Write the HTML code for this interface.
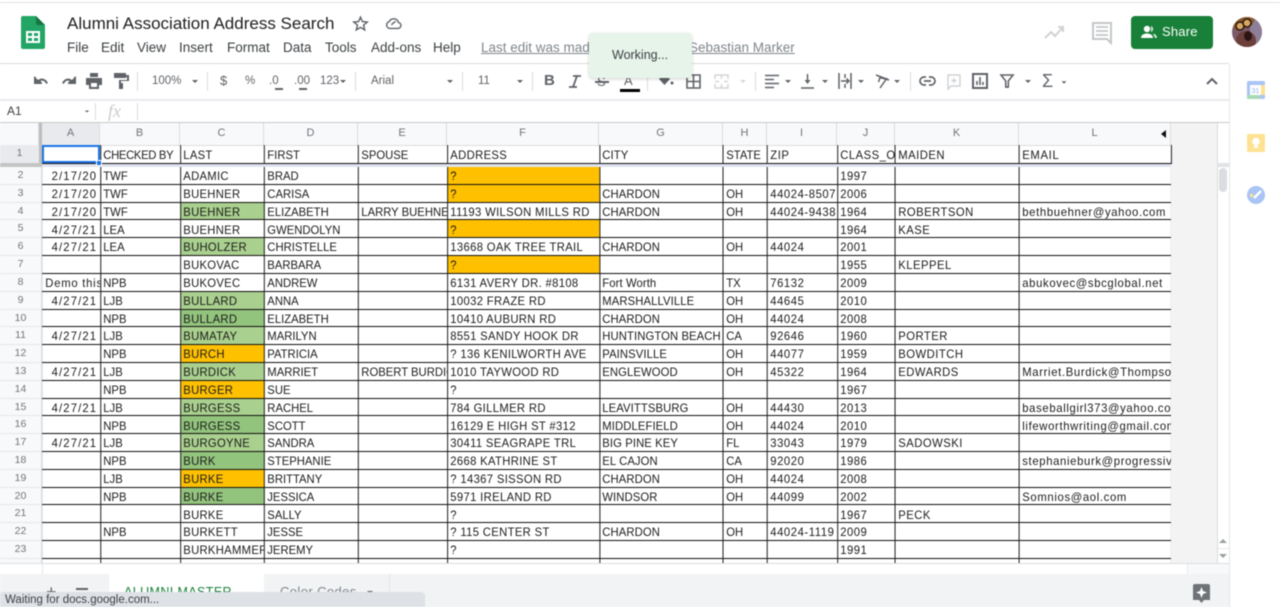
<!DOCTYPE html>
<html><head><meta charset="utf-8">
<style>
*{box-sizing:border-box}
html,body{margin:0;padding:0;width:1280px;height:607px;overflow:hidden;background:#fff;font-family:"Liberation Sans",sans-serif}
#p{position:relative;width:1280px;height:607px;overflow:hidden;filter:blur(.45px)}
.a{position:absolute}
.t{position:absolute;white-space:nowrap;color:#5f6368;line-height:14px}
.m{position:absolute;top:40px;font-size:13.5px;color:#3c4043;line-height:15px;white-space:nowrap}
svg{position:absolute;overflow:visible}
.sep{position:absolute;top:72px;width:1px;height:19px;background:#dadce0}
.ch{position:absolute;top:123px;height:22px;font-size:11px;line-height:21px;text-align:center;color:#70757a;background:#f8f9fa;border-right:1px solid #dadce0}
.rh{height:17.82px;line-height:16px;font-size:10.5px;color:#70757a;text-align:center;border-bottom:1px solid #e4e6e8}
.arr{position:absolute;width:0;height:0;border-left:3.5px solid transparent;border-right:3.5px solid transparent;border-top:3.5px solid #5f6368}
table{border-collapse:collapse;table-layout:fixed;width:1201px;position:absolute;transform:scaleX(.94);transform-origin:0 0;font-size:12px;color:#1c1c1c}
td{border:1px solid #111;padding:1.5px 3px 0 2.5px;height:17.82px;line-height:14px;overflow:hidden;white-space:nowrap}
td:first-child{border-left:1px solid #e4e4e4}
td:nth-child(3){letter-spacing:.3px}
td:nth-child(6){letter-spacing:.35px}
td:nth-child(7){letter-spacing:.1px}
td:nth-child(9){letter-spacing:.6px}
td:nth-child(10){letter-spacing:.5px}
td:nth-child(11){letter-spacing:.5px}
td:nth-child(12){letter-spacing:.7px}
td.d{text-align:right;letter-spacing:1.2px;padding-right:3px}
.g{background:#a9d08e}.h{background:#93c47d}.o{background:#ffc000}
</style></head><body><div id="p">

<div class="a" style="left:0;top:2px;width:1280px;height:1px;background:#e0e0e0"></div>

<!-- Sheets logo -->
<svg style="left:21px;top:16px" width="24" height="34" viewBox="0 0 24 34">
<path d="M2 0H15L24 9V31a2 2 0 0 1-2 2H2a2 2 0 0 1-2-2V2a2 2 0 0 1 2-2z" fill="#23a566"/>
<path d="M15 0L24 9H17a2 2 0 0 1-2-2z" fill="#16753f"/>
<path d="M5 15H19V27H5zM7 17V20H11V17zM13 17V20H17V17zM7 22V25H11V22zM13 22V25H17V22z" fill="#fff" fill-rule="evenodd"/>
</svg>

<div class="t" style="left:67px;top:14px;font-size:17px;line-height:20px;color:#202124">Alumni Association Address Search</div>
<svg style="left:352px;top:15px" width="17" height="17" viewBox="0 0 24 24"><path d="M12 3l2.7 6.3 6.8.6-5.2 4.5 1.6 6.7L12 17.5 6.1 21l1.6-6.7L2.5 9.9l6.8-.6z" fill="none" stroke="#5f6368" stroke-width="2"/></svg>
<svg style="left:385px;top:15px" width="17" height="17" viewBox="0 0 24 24"><path d="M7 19a5 5 0 0 1-1-9.8A7 7 0 0 1 19 10.500a4.300 4.300 0 0 1-.5 8.500z" fill="none" stroke="#5f6368" stroke-width="2"/><path d="M9 14l3-3 3-2" fill="none" stroke="#5f6368" stroke-width="2"/></svg>

<div class="m" style="left:67px">File</div>
<div class="m" style="left:101px">Edit</div>
<div class="m" style="left:137px">View</div>
<div class="m" style="left:179px">Insert</div>
<div class="m" style="left:227px">Format</div>
<div class="m" style="left:283px">Data</div>
<div class="m" style="left:325px">Tools</div>
<div class="m" style="left:371px">Add-ons</div>
<div class="m" style="left:433px">Help</div>
<div class="m" style="left:481px;color:#80868b;text-decoration:underline">Last edit was made</div>
<div class="m" style="left:689px;color:#80868b;text-decoration:underline">Sebastian Marker</div>

<!-- right header -->
<svg style="left:1044px;top:24px" width="21" height="16" viewBox="0 0 21 16"><path d="M1 14l6-6 4 4 8-9M14 3h5v5" fill="none" stroke="#d0d2d5" stroke-width="2"/></svg>
<svg style="left:1092px;top:22px" width="20" height="22" viewBox="0 0 20 22"><path d="M1 1H19V21L15 17H1z" fill="none" stroke="#c4c6c9" stroke-width="2"/><path d="M4 5H16M4 9H16M4 13H16" stroke="#c4c6c9" stroke-width="1.800"/></svg>
<div class="a" style="left:1131px;top:16px;width:82px;height:33px;background:#188038;border-radius:4px"></div>
<svg style="left:1141px;top:25px" width="16" height="14" viewBox="0 0 16 14"><circle cx="6" cy="4" r="3.200" fill="#fff"/><path d="M0 13c0-3 3-4.500 6-4.500s6 1.500 6 4.500z" fill="#fff"/><path d="M10 1a3.200 3.200 0 0 1 0 6M12 8.500c2 .5 4 1.500 4 4.500h-2" fill="#cfe5d6"/></svg>
<div class="t" style="left:1162px;top:25px;font-size:13px;color:#fff;font-weight:400;letter-spacing:.2px">Share</div>
<svg style="left:1232px;top:17px" width="30" height="30" viewBox="0 0 30 30">
<defs><clipPath id="c"><circle cx="15" cy="15" r="15"/></clipPath></defs>
<g clip-path="url(#c)"><rect width="30" height="30" fill="#7b5a6b"/><rect x="18" width="12" height="30" fill="#8d7f97"/><path d="M6 0H24L20 8 5 14 0 8z" fill="#8a5a2c"/><ellipse cx="14" cy="24" rx="10" ry="10" fill="#6b3f3a"/><ellipse cx="16" cy="19" rx="4" ry="5" fill="#2b1513"/><circle cx="8" cy="9" r="4" fill="#d9a860" stroke="#2a1a10" stroke-width="1.500"/><circle cx="15" cy="6" r="4" fill="#d9a860" stroke="#2a1a10" stroke-width="1.500"/></g></svg>

<!-- toolbar -->
<div class="a" style="left:0;top:63px;width:1229px;height:1px;background:#dadce0"></div>
<div class="a" style="left:0;top:99px;width:1229px;height:2px;background:#e8eaed"></div>
<svg style="left:33px;top:74px" width="17" height="14" viewBox="0 0 17 14"><path d="M2 3V9H8L5.700 6.800C8.500 4.500 12.500 5.500 14 9.500" fill="none" stroke="#5f6368" stroke-width="2" stroke-linejoin="round"/><path d="M1 2V10H9z" fill="#5f6368"/></svg>
<svg style="left:60px;top:74px" width="17" height="14" viewBox="0 0 17 14"><path d="M15 3V9H9L11.300 6.800C8.500 4.500 4.500 5.500 3 9.500" fill="none" stroke="#5f6368" stroke-width="2" stroke-linejoin="round"/><path d="M16 2V10H8z" fill="#5f6368"/></svg>
<svg style="left:86px;top:73px" width="16" height="16" viewBox="0 0 16 16"><path d="M4 0H12V4H4zM0 5H16V12H13V16H3V12H0zM5 10V14H11V10z" fill="#5f6368" fill-rule="evenodd"/></svg>
<svg style="left:114px;top:73px" width="15" height="16" viewBox="0 0 15 16"><path d="M0 0H12V5H0zM12 2H15V8H7V10H9V16H5V7H13V4H12z" fill="#5f6368"/></svg>
<div class="sep" style="left:137px"></div>
<div class="t" style="left:152px;top:74px;font-size:11.500px">100%</div><div class="arr" style="left:192px;top:80px"></div>
<div class="sep" style="left:207px"></div>
<div class="t" style="left:220px;top:74px;font-size:13px">$</div>
<div class="t" style="left:245px;top:74px;font-size:11.500px">%</div>
<div class="t" style="left:269px;top:74px;font-size:11.500px">.0</div>
<div class="a" style="left:275px;top:88px;width:8px;height:1.500px;background:#5f6368"></div>
<div class="t" style="left:294px;top:74px;font-size:11.500px">.00</div>
<div class="a" style="left:299px;top:88px;width:8px;height:1.500px;background:#5f6368"></div>
<div class="t" style="left:320px;top:74px;font-size:11.500px">123</div><div class="arr" style="left:340px;top:80px"></div>
<div class="sep" style="left:355px"></div>
<div class="t" style="left:371px;top:74px;font-size:11.500px">Arial</div><div class="arr" style="left:447px;top:80px"></div>
<div class="sep" style="left:462px"></div>
<div class="t" style="left:478px;top:74px;font-size:11.500px">11</div><div class="arr" style="left:517px;top:80px"></div>
<div class="sep" style="left:532px"></div>
<div class="t" style="left:544px;top:74px;font-size:15px;font-weight:700;color:#5f6368">B</div>
<svg style="left:569px;top:75px" width="12" height="13" viewBox="0 0 12 13"><path d="M4 1H12M0 12H8M8 1L4 12" fill="none" stroke="#5f6368" stroke-width="1.800"/></svg>
<div class="t" style="left:597px;top:75px;font-size:13px;color:#5f6368">S</div>
<div class="a" style="left:595px;top:81px;width:14px;height:1.500px;background:#5f6368"></div>
<div class="t" style="left:624px;top:74px;font-size:13px;z-index:1">A</div>
<div class="a" style="left:620px;top:89px;width:20px;height:3px;background:#000"></div>
<div class="sep" style="left:647px"></div>
<svg style="left:658px;top:74px" width="16" height="13" viewBox="0 0 16 13"><path d="M1 5L6 0l6 5-5.500 6z" fill="#5f6368"/><circle cx="14" cy="9" r="1.500" fill="#5f6368"/></svg>
<svg style="left:686px;top:74px" width="15" height="15" viewBox="0 0 15 15"><path d="M1 1H14V14H1zM7.500 1V14M1 7.500H14" fill="none" stroke="#5f6368" stroke-width="1.600"/></svg>
<svg style="left:714px;top:74px" width="15" height="15" viewBox="0 0 15 15"><path d="M1 5V1H14V5M1 10V14H14V10M7.500 1V5M7.500 10V14M1 7.500H5M10 7.500H14" fill="none" stroke="#d3d5d8" stroke-width="1.500"/></svg>
<div class="arr" style="left:740px;top:80px;border-top-color:#d3d5d8"></div>
<div class="sep" style="left:755px"></div>
<svg style="left:765px;top:74px" width="14" height="15" viewBox="0 0 14 15"><path d="M0 1.500H14M0 5.500H9M0 9.500H14M0 13.500H9" stroke="#5f6368" stroke-width="1.600"/></svg><div class="arr" style="left:785px;top:80px"></div>
<svg style="left:801px;top:74px" width="13" height="15" viewBox="0 0 13 15"><path d="M6.500 0V8M0 14H13" fill="none" stroke="#5f6368" stroke-width="1.500"/><path d="M3.500 6L6.500 10 9.500 6z" fill="#5f6368"/></svg><div class="arr" style="left:822px;top:80px"></div>
<svg style="left:838px;top:73px" width="14" height="16" viewBox="0 0 14 16"><path d="M1 0V16M13 0V16M7 1V5M7 11V15M3 8H11M8.500 5.500L11 8 8.500 10.500" fill="none" stroke="#5f6368" stroke-width="1.500"/></svg><div class="arr" style="left:858px;top:80px"></div>
<svg style="left:875px;top:73px" width="15" height="16" viewBox="0 0 15 16"><path d="M1 2L14 7 5 4.500 3.500 9 M12 5L5 15" fill="none" stroke="#5f6368" stroke-width="1.500"/></svg><div class="arr" style="left:894px;top:80px"></div>
<div class="sep" style="left:910px"></div>
<svg style="left:919px;top:76px" width="17" height="10" viewBox="0 0 17 10"><path d="M7 1H5a4 4 0 0 0 0 8h2M10 1h2a4 4 0 0 1 0 8h-2M5 5H12" fill="none" stroke="#5f6368" stroke-width="1.700"/></svg>
<svg style="left:947px;top:74px" width="14" height="16" viewBox="0 0 14 16"><path d="M1 1H13V12H4L1 15zM7 4V9M4.500 6.500H9.500" fill="none" stroke="#d0d2d5" stroke-width="1.400"/></svg>
<svg style="left:972px;top:73px" width="16" height="16" viewBox="0 0 16 16"><path d="M1 1H15V15H1z" fill="none" stroke="#5f6368" stroke-width="2"/><path d="M5 8V12M8 4V12M11 9V12" stroke="#5f6368" stroke-width="1.600"/></svg>
<svg style="left:1000px;top:74px" width="14" height="14" viewBox="0 0 14 14"><path d="M0 0H14L8.500 7V14H5.500V7z" fill="none" stroke="#5f6368" stroke-width="1.800" transform="translate(1 1) scale(.86)"/></svg><div class="arr" style="left:1025px;top:80px"></div>
<div class="t" style="left:1042px;top:72px;font-size:18px;line-height:18px">Σ</div><div class="arr" style="left:1061px;top:81px;transform:scale(.8)"></div>
<svg style="left:1206px;top:77px" width="12" height="8" viewBox="0 0 12 8"><path d="M1 7L6 2 11 7" fill="none" stroke="#5f6368" stroke-width="2"/></svg>

<!-- toast -->
<div class="a" style="left:589px;top:33px;width:103px;height:45px;background:#e6f4ea;border-radius:4px;box-shadow:0 1px 3px rgba(0,0,0,.18);z-index:3"></div>
<div class="t" style="left:612px;top:48px;font-size:12.500px;color:#3c4043;z-index:4">Working...</div>

<!-- formula bar -->
<div class="t" style="left:7px;top:104px;font-size:12px;color:#3c4043">A1</div>
<div class="arr" style="left:84px;top:110px;transform:scale(.7)"></div>
<div class="a" style="left:95px;top:103px;width:1px;height:17px;background:#dadce0"></div>
<div class="t" style="left:108px;top:102px;font:italic 18px/18px 'Liberation Serif',serif;color:#c8cacd">fx</div>
<div class="a" style="left:137px;top:103px;width:1px;height:17px;background:#dadce0"></div>
<div class="a" style="left:0;top:122px;width:1229px;height:1px;background:#c8c8c8"></div>

<!-- headers -->
<div class="a" style="left:0;top:123px;width:1171px;height:22px;background:#f8f9fa"></div>
<div class="ch" style="left:42px;width:58px;background:#e8eaed">A</div>
<div class="ch" style="left:100px;width:80px">B</div>
<div class="ch" style="left:180px;width:84px">C</div>
<div class="ch" style="left:264px;width:94px">D</div>
<div class="ch" style="left:358px;width:89px">E</div>
<div class="ch" style="left:447px;width:152px">F</div>
<div class="ch" style="left:599px;width:124px">G</div>
<div class="ch" style="left:723px;width:44px">H</div>
<div class="ch" style="left:767px;width:70px">I</div>
<div class="ch" style="left:837px;width:58px">J</div>
<div class="ch" style="left:895px;width:124px">K</div>
<div class="ch" style="left:1019px;width:152px">L</div>
<div class="a" style="left:1161px;top:130px;width:0;height:0;border-top:4px solid transparent;border-bottom:4px solid transparent;border-right:5px solid #111"></div>

<div class="a" style="left:0;top:123px;width:39px;height:22px;background:#f8f9fa;border-right:1px solid #dadce0"></div>
<div class="a" style="left:39px;top:123px;width:3px;height:40px;background:#bdbdbd"></div>
<div class="a" style="left:0;top:145px;width:39px;height:18px;background:#e8eaed;font-size:10.500px;color:#70757a;text-align:center;line-height:17px">1</div>
<div class="a" style="left:0;top:163px;width:42px;height:4px;background:#c4c4c4"></div>
<div class="a" style="left:42px;top:163px;width:1129px;height:4px;background:#dfe3ee"></div>

<div class="a" style="left:0;top:167px;width:42px;height:392px;background:#f8f9fa;border-right:1px solid #dadce0;">
<div class="rh">2</div><div class="rh">3</div><div class="rh">4</div><div class="rh">5</div><div class="rh">6</div><div class="rh">7</div><div class="rh">8</div><div class="rh">9</div><div class="rh">10</div><div class="rh">11</div><div class="rh">12</div><div class="rh">13</div><div class="rh">14</div><div class="rh">15</div><div class="rh">16</div><div class="rh">17</div><div class="rh">18</div><div class="rh">19</div><div class="rh">20</div><div class="rh">21</div><div class="rh">22</div><div class="rh">23</div>
</div>
<div class="a" style="left:0;top:559px;width:42px;height:4px;background:#f8f9fa;border-right:1px solid #dadce0"></div>

<!-- grey areas -->
<div class="a" style="left:1171px;top:123px;width:46px;height:440px;background:#f3f3f3"></div>
<div class="a" style="left:1217px;top:123px;width:12px;height:440px;background:#fff;border-left:1px solid #dadce0"></div>
<div class="a" style="left:1217px;top:163px;width:12px;height:4px;background:#e1e3e6"></div>
<div class="a" style="left:1219px;top:168px;width:8px;height:24px;background:#dadce0;border-radius:4px"></div>
<div class="a" style="left:1218px;top:534px;width:11px;height:15px;border-bottom:1px solid #e8eaed"></div>
<div class="a" style="left:1219px;top:539px;width:0;height:0;border-left:4px solid transparent;border-right:4px solid transparent;border-bottom:4px solid #9a9da1"></div>
<div class="a" style="left:1219px;top:554px;border-left:4px solid transparent;border-right:4px solid transparent;border-top:4px solid #9a9da1;width:0;height:0"></div>

<!-- table header row -->
<div class="a" style="left:42px;top:145px;width:1130px;height:20px;overflow:hidden">
<table style="left:0;top:0">
<colgroup><col style="width:61.7px"><col style="width:85.1px"><col style="width:89.4px"><col style="width:100px"><col style="width:94.700px"><col style="width:161.700px"><col style="width:131.900px"><col style="width:46.800px"><col style="width:74.500px"><col style="width:61.700px"><col style="width:131.900px"><col style="width:161.700px"></colgroup>
<tr><td style="height:18px;border-top-color:#ddd"></td><td style="letter-spacing:-.35px;border-top-color:#ddd">CHECKED BY</td><td style="border-top-color:#ddd">LAST</td><td style="border-top-color:#ddd">FIRST</td><td style="border-top-color:#ddd">SPOUSE</td><td style="border-top-color:#ddd">ADDRESS</td><td style="border-top-color:#ddd">CITY</td><td style="border-top-color:#ddd">STATE</td><td style="border-top-color:#ddd">ZIP</td><td style="border-top-color:#ddd">CLASS_OF</td><td style="border-top-color:#ddd">MAIDEN</td><td style="border-top-color:#ddd">EMAIL</td></tr>
</table></div>
<div class="a" style="left:42px;top:145px;width:58px;height:18px;border:2px solid #1a73e8"></div>
<div class="a" style="left:96px;top:160px;width:6px;height:6px;background:#1a73e8;border:1px solid #fff"></div>

<!-- table body -->
<div class="a" style="left:42px;top:167px;width:1129px;height:396px;overflow:hidden">
<table style="left:0;top:-1px">
<colgroup><col style="width:61.7px"><col style="width:85.1px"><col style="width:89.4px"><col style="width:100px"><col style="width:94.700px"><col style="width:161.700px"><col style="width:131.900px"><col style="width:46.800px"><col style="width:74.500px"><col style="width:61.700px"><col style="width:131.900px"><col style="width:161.700px"></colgroup>
<tr><td class="d">2/17/20</td><td>TWF</td><td>ADAMIC</td><td>BRAD</td><td></td><td class="o">?</td><td></td><td></td><td></td><td>1997</td><td></td><td></td></tr>
<tr><td class="d">2/17/20</td><td>TWF</td><td>BUEHNER</td><td>CARISA</td><td></td><td class="o">?</td><td>CHARDON</td><td>OH</td><td>44024-8507</td><td>2006</td><td></td><td></td></tr>
<tr><td class="d">2/17/20</td><td>TWF</td><td class="g">BUEHNER</td><td>ELIZABETH</td><td>LARRY BUEHNER</td><td>11193 WILSON MILLS RD</td><td>CHARDON</td><td>OH</td><td>44024-9438</td><td>1964</td><td>ROBERTSON</td><td>bethbuehner@yahoo.com</td></tr>
<tr><td class="d">4/27/21</td><td>LEA</td><td>BUEHNER</td><td>GWENDOLYN</td><td></td><td class="o">?</td><td></td><td></td><td></td><td>1964</td><td>KASE</td><td></td></tr>
<tr><td class="d">4/27/21</td><td>LEA</td><td class="g">BUHOLZER</td><td>CHRISTELLE</td><td></td><td>13668 OAK TREE TRAIL</td><td>CHARDON</td><td>OH</td><td>44024</td><td>2001</td><td></td><td></td></tr>
<tr><td></td><td></td><td>BUKOVAC</td><td>BARBARA</td><td></td><td class="o">?</td><td></td><td></td><td></td><td>1955</td><td>KLEPPEL</td><td></td></tr>
<tr><td style="letter-spacing:.8px">Demo this</td><td>NPB</td><td>BUKOVEC</td><td>ANDREW</td><td></td><td>6131 AVERY DR. #8108</td><td>Fort Worth</td><td>TX</td><td>76132</td><td>2009</td><td></td><td>abukovec@sbcglobal.net</td></tr>
<tr><td class="d">4/27/21</td><td>LJB</td><td class="g">BULLARD</td><td>ANNA</td><td></td><td>10032 FRAZE RD</td><td>MARSHALLVILLE</td><td>OH</td><td>44645</td><td>2010</td><td></td><td></td></tr>
<tr><td></td><td>NPB</td><td class="h">BULLARD</td><td>ELIZABETH</td><td></td><td>10410 AUBURN RD</td><td>CHARDON</td><td>OH</td><td>44024</td><td>2008</td><td></td><td></td></tr>
<tr><td class="d">4/27/21</td><td>LJB</td><td class="g">BUMATAY</td><td>MARILYN</td><td></td><td>8551 SANDY HOOK DR</td><td>HUNTINGTON BEACH</td><td>CA</td><td>92646</td><td>1960</td><td>PORTER</td><td></td></tr>
<tr><td></td><td>NPB</td><td class="o">BURCH</td><td>PATRICIA</td><td></td><td>? 136 KENILWORTH AVE</td><td>PAINSVILLE</td><td>OH</td><td>44077</td><td>1959</td><td>BOWDITCH</td><td></td></tr>
<tr><td class="d">4/27/21</td><td>LJB</td><td class="g">BURDICK</td><td>MARRIET</td><td>ROBERT BURDICK</td><td>1010 TAYWOOD RD</td><td>ENGLEWOOD</td><td>OH</td><td>45322</td><td>1964</td><td>EDWARDS</td><td>Marriet.Burdick@Thompsonhine</td></tr>
<tr><td></td><td>NPB</td><td class="o">BURGER</td><td>SUE</td><td></td><td>?</td><td></td><td></td><td></td><td>1967</td><td></td><td></td></tr>
<tr><td class="d">4/27/21</td><td>LJB</td><td class="g">BURGESS</td><td>RACHEL</td><td></td><td>784 GILLMER RD</td><td>LEAVITTSBURG</td><td>OH</td><td>44430</td><td>2013</td><td></td><td>baseballgirl373@yahoo.com</td></tr>
<tr><td></td><td>NPB</td><td class="h">BURGESS</td><td>SCOTT</td><td></td><td>16129 E HIGH ST #312</td><td>MIDDLEFIELD</td><td>OH</td><td>44024</td><td>2010</td><td></td><td>lifeworthwriting@gmail.com</td></tr>
<tr><td class="d">4/27/21</td><td>LJB</td><td class="g">BURGOYNE</td><td>SANDRA</td><td></td><td>30411 SEAGRAPE TRL</td><td>BIG PINE KEY</td><td>FL</td><td>33043</td><td>1979</td><td>SADOWSKI</td><td></td></tr>
<tr><td></td><td>NPB</td><td class="h">BURK</td><td>STEPHANIE</td><td></td><td>2668 KATHRINE ST</td><td>EL CAJON</td><td>CA</td><td>92020</td><td>1986</td><td></td><td>stephanieburk@progressive.com</td></tr>
<tr><td></td><td>LJB</td><td class="o">BURKE</td><td>BRITTANY</td><td></td><td>? 14367 SISSON RD</td><td>CHARDON</td><td>OH</td><td>44024</td><td>2008</td><td></td><td></td></tr>
<tr><td></td><td>NPB</td><td class="h">BURKE</td><td>JESSICA</td><td></td><td>5971 IRELAND RD</td><td>WINDSOR</td><td>OH</td><td>44099</td><td>2002</td><td></td><td>Somnios@aol.com</td></tr>
<tr><td></td><td></td><td>BURKE</td><td>SALLY</td><td></td><td>?</td><td></td><td></td><td></td><td>1967</td><td>PECK</td><td></td></tr>
<tr><td></td><td>NPB</td><td>BURKETT</td><td>JESSE</td><td></td><td>? 115 CENTER ST</td><td>CHARDON</td><td>OH</td><td>44024-1119</td><td>2009</td><td></td><td></td></tr>
<tr><td></td><td></td><td>BURKHAMMER</td><td>JEREMY</td><td></td><td>?</td><td></td><td></td><td></td><td>1991</td><td></td><td></td></tr>
<tr><td></td><td></td><td></td><td></td><td></td><td></td><td></td><td></td><td></td><td></td><td></td><td></td></tr>
</table></div>

<!-- bottom -->
<div class="a" style="left:0;top:563px;width:1229px;height:1px;background:#dadce0"></div>
<div class="a" style="left:0;top:564px;width:1229px;height:10px;background:#fff"></div>
<div class="a" style="left:42px;top:564px;width:1px;height:10px;background:#e2e3e5"></div>
<div class="a" style="left:1187px;top:564px;width:42px;height:10px;background:#f8f9fa;border-left:1px solid #e8eaed"></div>
<div class="a" style="left:0;top:574px;width:1229px;height:33px;background:#f1f3f4"></div>
<div class="t" style="left:46px;top:582px;font-size:18px;line-height:20px">+</div>
<div class="a" style="left:76px;top:588px;width:12px;height:9px;border-top:2px solid #5f6368;border-bottom:2px solid #5f6368"></div>
<div class="a" style="left:109px;top:574px;width:155px;height:33px;background:#fff"></div>
<div class="t" style="left:124px;top:585px;font-size:12.500px;color:#188038;letter-spacing:.4px">ALUMNI MASTER</div>
<div class="a" style="left:264px;top:574px;width:126px;height:33px;background:#f1f3f4;border-right:1px solid #e4e6e8"></div>
<div class="t" style="left:280px;top:585px;font-size:13px;color:#80868b;letter-spacing:.4px">Color Codes</div>
<div class="arr" style="left:367px;top:591px"></div>
<div class="a" style="left:0;top:592px;width:425px;height:15px;background:#dee1e6;border-top-right-radius:4px;border-top-left-radius:3px"></div>
<div class="t" style="left:5px;top:594px;font-size:11.500px;color:#3c4043;line-height:13px">Waiting for docs.google.com...</div>
<svg style="left:1193px;top:584px" width="17" height="21" viewBox="0 0 17 21"><path d="M2 0H15a2 2 0 0 1 2 2V16H11L8.500 19 6 16H0V2a2 2 0 0 1 2-2z" fill="#6f7377"/><path d="M8.500 3L10 7 14 8.500 10 10 8.500 14 7 10 3 8.500 7 7z" fill="#fff"/></svg>

<!-- side panel -->
<div class="a" style="left:1229px;top:64px;width:1px;height:543px;background:#e4e6e8"></div>
<svg style="left:1247px;top:81px" width="18" height="18" viewBox="0 0 18 18"><rect width="18" height="18" rx="1.500" fill="#a9c4f5"/><rect x="0" y="14" width="13" height="4" fill="#a8dab5"/><rect x="14" y="4" width="4" height="10" fill="#fde293"/><rect x="3" y="4" width="11" height="10" fill="#fff"/><text x="4.500" y="12" font-size="7" fill="#8ab4f8" font-family="Liberation Sans">31</text></svg>
<svg style="left:1247px;top:134px" width="18" height="18" viewBox="0 0 18 18"><rect width="18" height="18" rx="1.500" fill="#fde293"/><circle cx="9" cy="7.500" r="3.800" fill="#fff"/><rect x="7" y="11.500" width="4" height="2.500" fill="#fff"/></svg>
<svg style="left:1247px;top:186px" width="18" height="18" viewBox="0 0 18 18"><circle cx="9" cy="9" r="9" fill="#a9c4f5"/><path d="M7 12L14 5" stroke="#fff" stroke-width="2.500"/><circle cx="4.500" cy="9.500" r="1.700" fill="#fde293"/></svg>

</div></body></html>
